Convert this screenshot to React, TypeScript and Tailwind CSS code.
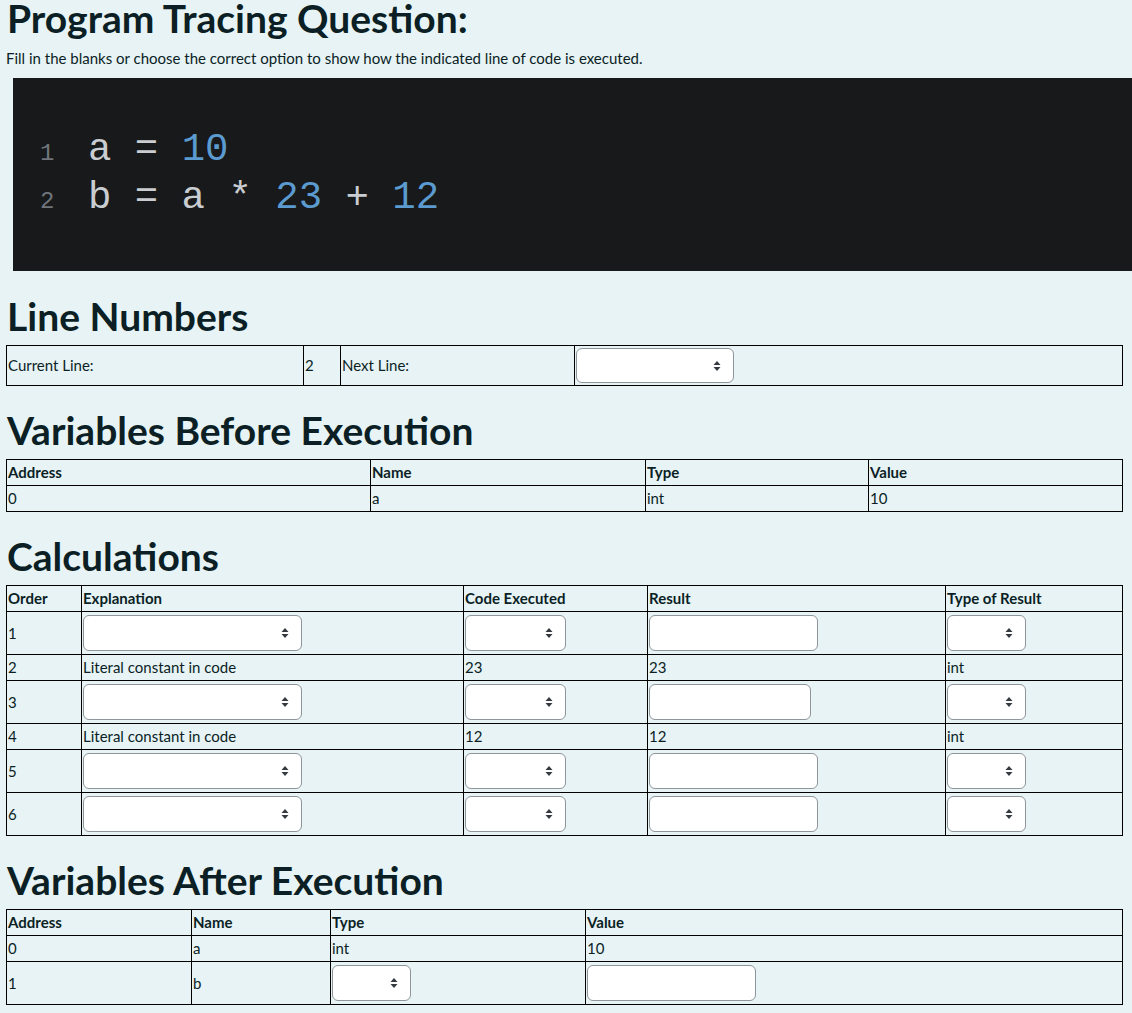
import { useState } from "react";

const ink = "text-[#0b1f25]";

const Arrows = () => (
  <svg
    width="8"
    height="12"
    viewBox="0 0 8 12"
    className="pointer-events-none absolute right-[13px] top-1/2 -translate-y-1/2"
  >
    <path d="M4 1 L7.5 5 H0.5 Z" fill="#343a40" />
    <path d="M4 11 L7.5 7 H0.5 Z" fill="#343a40" />
  </svg>
);

const Select = ({ w, h = "h-[36px]" }: { w: string; h?: string }) => {
  const [v, setV] = useState("");
  return (
    <div className={`relative ${w}`}>
      <select
        value={v}
        onChange={(e) => setV(e.target.value)}
        className={`block w-full ${h} appearance-none rounded-[6px] border border-[#8f959a] bg-white`}
      >
        <option value=""></option>
      </select>
      <Arrows />
    </div>
  );
};

const Input = ({ w }: { w: string }) => (
  <input
    type="text"
    className={`block ${w} h-[36px] rounded-[6px] border border-[#8f959a] bg-white px-2`}
  />
);

const H2 = ({ children, mt = "mt-[26px]" }: { children: React.ReactNode; mt?: string }) => (
  <h2 className={`ml-[7px] ${mt} mb-[11px] text-[39px] font-bold leading-[36px] ${ink}`}>
    {children}
  </h2>
);

const cell = "border border-black p-0 pl-px text-left align-middle";
const th = `${cell} font-bold leading-[25px]`;
const td = `${cell} font-normal leading-[25px]`;
const tdc = `${cell} py-[3px]`;

type Calc =
  | { kind: "blank"; n: number; resW: string }
  | { kind: "fixed"; n: number; val: string };

const calcRows: Calc[] = [
  { kind: "blank", n: 1, resW: "w-[169px]" },
  { kind: "fixed", n: 2, val: "23" },
  { kind: "blank", n: 3, resW: "w-[162px]" },
  { kind: "fixed", n: 4, val: "12" },
  { kind: "blank", n: 5, resW: "w-[169px]" },
  { kind: "blank", n: 6, resW: "w-[169px]" },
];

const num = "text-[#5b9bd0]";
const gutter = "inline-block w-[48px] text-[24px] leading-none text-[#6f757b]";

export default function App() {
  return (
    <div
      className={`min-h-screen bg-[#e7f3f5] pb-[10px] text-[15px] ${ink}`}
      style={{ fontFamily: "Lato, 'Open Sans', sans-serif" }}
    >
      <h1 className="ml-[7px] text-[39px] font-bold leading-[36px]">Program Tracing Question:</h1>
      <p className="ml-[6px] mt-[12px] leading-[20px]">
        Fill in the blanks or choose the correct option to show how the indicated line of code is
        executed.
      </p>

      <div
        className="ml-[13px] mt-[10px] bg-[#18191b] pl-[27px] pt-[48px] pb-[49px] text-[39px] text-[#c9cdd1]"
        style={{ fontFamily: "'Liberation Mono', 'Courier New', monospace" }}
      >
        <div className="h-[48px] whitespace-pre leading-[48px]">
          <span className={gutter}>1</span>a = <span className={num}>10</span>
        </div>
        <div className="h-[48px] whitespace-pre leading-[48px]">
          <span className={gutter}>2</span>b = a * <span className={num}>23</span> +{" "}
          <span className={num}>12</span>
        </div>
      </div>

      <H2 mt="mt-[27px]">Line Numbers</H2>
      <table className="ml-[6px] w-[1117px] table-fixed border-collapse">
        <tbody>
          <tr>
            <td className={`${td} w-[297px]`}>Current Line:</td>
            <td className={`${td} w-[37px]`}>2</td>
            <td className={`${td} w-[234px]`}>Next Line:</td>
            <td className={`${cell} py-[2px]`}>
              <Select w="w-[158px]" h="h-[35px]" />
            </td>
          </tr>
        </tbody>
      </table>

      <H2>Variables Before Execution</H2>
      <table className="ml-[6px] w-[1117px] table-fixed border-collapse">
        <thead>
          <tr>
            <th className={`${th} w-[364px]`}>Address</th>
            <th className={`${th} w-[275px]`}>Name</th>
            <th className={`${th} w-[223px]`}>Type</th>
            <th className={th}>Value</th>
          </tr>
        </thead>
        <tbody>
          <tr>
            <td className={td}>0</td>
            <td className={td}>a</td>
            <td className={td}>int</td>
            <td className={td}>10</td>
          </tr>
        </tbody>
      </table>

      <H2>Calculations</H2>
      <table className="ml-[6px] w-[1117px] table-fixed border-collapse">
        <thead>
          <tr>
            <th className={`${th} w-[75px]`}>Order</th>
            <th className={`${th} w-[382px]`}>Explanation</th>
            <th className={`${th} w-[184px]`}>Code Executed</th>
            <th className={`${th} w-[298px]`}>Result</th>
            <th className={th}>Type of Result</th>
          </tr>
        </thead>
        <tbody>
          {calcRows.map((r) =>
            r.kind === "fixed" ? (
              <tr key={r.n}>
                <td className={td}>{r.n}</td>
                <td className={td}>Literal constant in code</td>
                <td className={td}>{r.val}</td>
                <td className={td}>{r.val}</td>
                <td className={td}>int</td>
              </tr>
            ) : (
              <tr key={r.n}>
                <td className={td}>{r.n}</td>
                <td className={tdc}>
                  <Select w="w-[219px]" />
                </td>
                <td className={tdc}>
                  <Select w="w-[101px]" />
                </td>
                <td className={tdc}>
                  <Input w={r.resW} />
                </td>
                <td className={tdc}>
                  <Select w="w-[79px]" />
                </td>
              </tr>
            )
          )}
        </tbody>
      </table>

      <H2>Variables After Execution</H2>
      <table className="ml-[6px] w-[1117px] table-fixed border-collapse">
        <thead>
          <tr>
            <th className={`${th} w-[185px]`}>Address</th>
            <th className={`${th} w-[139px]`}>Name</th>
            <th className={`${th} w-[255px]`}>Type</th>
            <th className={th}>Value</th>
          </tr>
        </thead>
        <tbody>
          <tr>
            <td className={td}>0</td>
            <td className={td}>a</td>
            <td className={td}>int</td>
            <td className={td}>10</td>
          </tr>
          <tr>
            <td className={td}>1</td>
            <td className={td}>b</td>
            <td className={tdc}>
              <Select w="w-[79px]" />
            </td>
            <td className={tdc}>
              <Input w="w-[169px]" />
            </td>
          </tr>
        </tbody>
      </table>
    </div>
  );
}
